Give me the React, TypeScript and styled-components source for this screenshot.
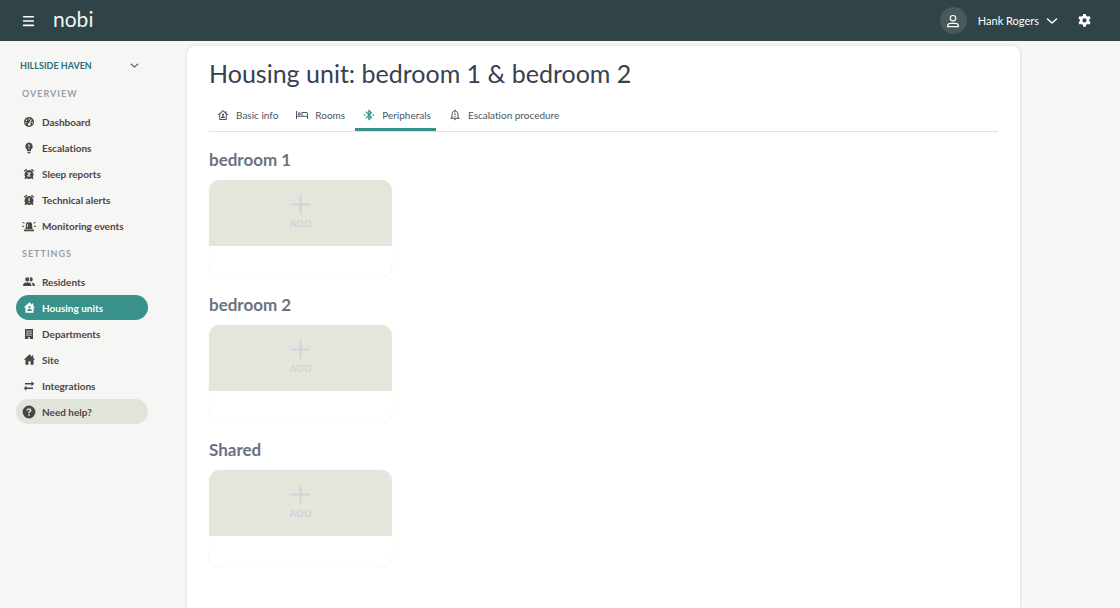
import React from "react";
import styled, { createGlobalStyle } from "styled-components";

const GlobalStyle = createGlobalStyle`
  *, *::before, *::after { box-sizing: border-box; }
  body {
    margin: 0;
    background: #f6f6f4;
    color: #4f4444;
    font-family: Lato, "Liberation Sans", sans-serif;
    font-size: 10px;
    font-variant-ligatures: none;
  }
  h1, h2, h3, ul { margin: 0; padding: 0; }
  ul { list-style: none; }
  button { font: inherit; font-variant-ligatures: none; color: inherit; background: none; border: 0; padding: 0; cursor: pointer; }
`;

const Page = styled.div`
  display: flex;
  flex-direction: column;
  min-height: 100vh;
`;

const TopBar = styled.header`
  display: flex;
  align-items: center;
  justify-content: space-between;
  height: 41px;
  padding: 0 28px 0 22px;
  background: #304346;
  color: #fff;
`;

const BarGroup = styled.div<{ $gap: number }>`
  display: flex;
  align-items: center;
  gap: ${(p) => p.$gap}px;
`;

const IconButton = styled.button`
  display: flex;
  align-items: center;
  justify-content: center;
`;

const Brand = styled.a`
  color: #f1f4f3;
  font-size: 21px;
  font-weight: 400;
  line-height: 24px;
  padding-bottom: 3px;
  text-decoration: none;
`;

const Avatar = styled.span`
  display: flex;
  align-items: center;
  justify-content: center;
  width: 27px;
  height: 27px;
  border-radius: 50%;
  background: #48595c;
`;

const UserButton = styled.button`
  display: flex;
  align-items: center;
  gap: 11px;
  font-size: 11px;
  line-height: 16px;
`;

const UserName = styled.span`
  display: flex;
  align-items: center;
  gap: 7px;
`;

const Body = styled.div`
  display: flex;
  flex: 1;
`;

const Sidebar = styled.nav`
  flex: none;
  width: 187px;
  padding: 12px 39px 0 16px;
`;

const SiteButton = styled.button`
  display: flex;
  align-items: center;
  justify-content: space-between;
  width: 100%;
  height: 25px;
  padding: 0 9px 0 4px;
  color: #2b7076;
  font-size: 9px;
  font-weight: 700;

  svg { color: #5b6470; }
`;

const GroupTitle = styled.h3`
  padding: 8px 6px 7px;
  color: #979fab;
  font-size: 9px;
  font-weight: 700;
  line-height: 16px;
  letter-spacing: 1px;
`;

const NavList = styled.ul`
  display: flex;
  flex-direction: column;
  gap: 1px;
`;

const NavLink = styled.a<{ $tone?: "active" | "help" }>`
  display: flex;
  align-items: center;
  gap: 6px;
  height: 25px;
  padding: 0 6px;
  border-radius: 13px;
  background: ${(p) => (p.$tone === "active" ? "#38918a" : p.$tone === "help" ? "#e1e4da" : "transparent")};
  color: ${(p) => (p.$tone === "active" ? "#fff" : "#4f4444")};
  font-weight: 700;
  text-decoration: none;
`;

const IconSlot = styled.span`
  display: flex;
  justify-content: center;
  width: 14px;
`;

const Card = styled.main`
  flex: 1;
  min-width: 0;
  margin: 5px 100px 0 0;
  padding: 9px 22px 24px;
  background: #fff;
  border-radius: 8px 8px 0 0;
  box-shadow: 0 0 3px rgba(0, 0, 0, 0.16);
`;

const Title = styled.h1`
  color: #374151;
  font-size: 25px;
  font-weight: 400;
  line-height: 36px;
`;

const Tabs = styled.div`
  display: flex;
  gap: 5px;
  margin-top: 10px;
  border-bottom: 1px solid #dfe1e4;
`;

const Tab = styled.button<{ $active?: boolean }>`
  display: flex;
  align-items: center;
  gap: 6px;
  height: 30px;
  padding: 1px 5px 0 7px;
  border-bottom: 3px solid ${(p) => (p.$active ? "#38918a" : "transparent")};
  color: #4b5563;
  font-size: 10px;

  svg { color: ${(p) => (p.$active ? "#38918a" : "#4b5563")}; }
`;

const Room = styled.section`
  padding-top: 16px;
`;

const RoomTitle = styled.h2`
  color: #6b7280;
  font-size: 17px;
  font-weight: 700;
  line-height: 24px;
`;

const Tile = styled.div`
  width: 183px;
  margin-top: 8px;
  padding-bottom: 31px;
  border-radius: 11px;
  box-shadow: 0 0 1px rgba(0, 0, 0, 0.16);
  overflow: hidden;
`;

const AddButton = styled.button`
  display: flex;
  flex-direction: column;
  align-items: center;
  justify-content: center;
  gap: 2px;
  width: 100%;
  height: 66px;
  padding-bottom: 2px;
  background: #e4e6dc;
  color: #d0d4da;
  font-size: 10px;
  font-weight: 700;
  line-height: 14px;
`;

type Glyph = { d: string; size?: number };

const Icon = ({ d, size = 13 }: Glyph) => (
  <svg width={size} height={size} viewBox="0 0 24 24" fill="currentColor" fillRule="evenodd" aria-hidden="true">
    <path d={d} />
  </svg>
);

const Line = ({ d, size = 12, weight = 2 }: Glyph & { weight?: number }) => (
  <svg width={size} height={size} viewBox="0 0 24 24" fill="none" stroke="currentColor" strokeWidth={weight} strokeLinecap="round" strokeLinejoin="round" aria-hidden="true">
    <path d={d} />
  </svg>
);

const CHEVRON = "M3 8l9 8 9-8";

const glyphs = {
  gauge: "M12 2a10 10 0 1 0 0 20 10 10 0 0 0 0-20zM12 4.500a1.500 1.500 0 1 1 0 3 1.500 1.500 0 0 1 0-3zM7 7a1.500 1.500 0 1 1 0 3 1.500 1.500 0 0 1 0-3zM5.500 12a1.500 1.500 0 1 1 0 3 1.500 1.500 0 0 1 0-3zM18.500 12a1.500 1.500 0 1 1 0 3 1.500 1.500 0 0 1 0-3zM15.800 6.500l1.800.9-3.300 7.400a2.700 2.700 0 1 1-2-.8z",
  bulb: "M12 1a7.500 7.500 0 0 0-4 13.800V17a1 1 0 0 0 1 1h6a1 1 0 0 0 1-1v-2.200A7.500 7.500 0 0 0 12 1zM11 4.500h2v6h-2zM11 12.500h2v2h-2zM9 19.500h6v1.500a1 1 0 0 1-1 1h-.5v1h-3v-1H10a1 1 0 0 1-1-1z",
  snooze: "M6.500 1.500L1.500 5.700l1.600 1.900 5-4.200zM17.500 1.500l5 4.200-1.600 1.900-5-4.200zM12 4a9 9 0 0 0-7.500 14L3 20.500 5 22.500l2.300-1.900a9 9 0 0 0 9.400 0L19 22.500l2-2L19.500 18A9 9 0 0 0 12 4zM8.500 9h7v2.200L11.300 15h4.200v2.200h-7V15l4.200-3.800H8.500z",
  alarm: "M6.500 1.500L1.500 5.700l1.600 1.900 5-4.200zM17.500 1.500l5 4.200-1.600 1.900-5-4.200zM12 4a9 9 0 0 0-7.500 14L3 20.500 5 22.500l2.300-1.900a9 9 0 0 0 9.400 0L19 22.500l2-2L19.500 18A9 9 0 0 0 12 4zM11 7.500h2.200v6.500H11zM11 16h2.200v2.200H11z",
  siren: "M6 17l1-9a3 3 0 0 1 3-2.500h4a3 3 0 0 1 3 2.500l1 9zM3.500 18h17v3h-17zM9.300 8.500L8.600 14h1.500l.6-5.500zM0 11.500h3.600v1.800H0zM20.400 11.500H24v1.800h-3.600zM1.300 4.500l3.400 2.200-.9 1.500L.4 6zM22.700 4.500l-3.400 2.200.9 1.500L23.600 6z",
  people: "M16 17v2H2v-2s0-4 7-4 7 4 7 4M12.500 7.500A3.500 3.500 0 1 0 9 11a3.500 3.500 0 0 0 3.500-3.500M15.940 13A5.320 5.320 0 0 1 18 17v2h4v-2s0-3.630-6.060-4M15 4a3.390 3.390 0 0 0-1.930.59 5 5 0 0 1 0 5.820A3.390 3.390 0 0 0 15 11a3.500 3.500 0 0 0 0-7z",
  homeUser: "M12 2.500L1.500 12.200H4.500V21.500h15v-9.300h3L19 9V4.500h-2.500v2.200zM12 9a2.200 2.200 0 1 1 0 4.400A2.200 2.200 0 0 1 12 9zM7.500 18.500v-1c0-1.700 3-2.700 4.500-2.700s4.500 1 4.500 2.700v1z",
  building: "M4 2v20h6.500v-4h3v4H20V2zM7 5h2.300v2.300H7zM10.900 5h2.300v2.300h-2.300zM14.800 5H17v2.300h-2.200zM7 9h2.300v2.300H7zM10.900 9h2.300v2.300h-2.300zM14.800 9H17v2.300h-2.200zM7 13h2.300v2.300H7zM10.900 13h2.300v2.300h-2.300zM14.800 13H17v2.300h-2.200z",
  home: "M10 21.500v-6.500h4v6.500h5.500v-9h3L19 9.300V4.500h-2.500V7L12 2.500 1.500 12.500h3v9z",
  swap: "M17 2.500l5.500 5-5.500 5V8.800H4V6.200h13zM7 11.500v3.700h13v2.600H7v3.700l-5.500-5z",
  bluetooth: "M20.500 10l-2 2 2 2 2-2zM14.900 16.300L13 18.200v-3.800zM13 5.800l1.900 1.900L13 9.600zM18.400 7.700L12.300 1.500H10.600v7L6.400 4.400 4.700 6.100 10.600 12l-5.900 5.900 1.700 1.700 4.200-4.200v7.100h1.700l6.100-6.200L14.100 12zM5.500 12l-2-2-2 2 2 2z",
  homeUserOutline: "M12 2L1 12.200H4.500V22h15v-9.800H23L19 8.500V4.500h-2v2.200zM12 4.700l5.500 5.100V20h-11V9.800zM12 9a2.300 2.300 0 1 0 0 4.600A2.300 2.300 0 0 0 12 9zM8 18.200v-1c0-1.600 2.700-2.500 4-2.500s4 .9 4 2.500v1z",
  bed: "M0 4h2v9.500h9V6h9a4 4 0 0 1 4 4v10h-2v-4.500H2V20H0zM13 8v5.500h9V10a2 2 0 0 0-2-2zM6.500 6.500a3 3 0 1 1 0 6 3 3 0 0 1 0-6zM6.500 8.300a1.200 1.200 0 1 0 0 2.400 1.200 1.200 0 0 0 0-2.400z",
  bell: "M12 1.500a1.800 1.800 0 0 0-1.800 2A7 7 0 0 0 5 10.200V16l-2.500 2.300V19.500h19V18.300L19 16v-5.800a7 7 0 0 0-5.200-6.700 1.800 1.800 0 0 0-1.800-2zM12 5a5 5 0 0 1 5 5.200v6.500l.8 1H6.200l.8-1v-6.500A5 5 0 0 1 12 5zM11 7.500h2v5h-2zM11 14h2v2h-2zM10 20.500h4a2 2 0 0 1-4 0z",
  gear: "M10 1.500h4l.6 3a8 8 0 0 1 2.300 1.300l2.900-1 2 3.500-2.300 2a8 8 0 0 1 0 2.700l2.300 2-2 3.500-2.900-1a8 8 0 0 1-2.300 1.300l-.6 3h-4l-.6-3a8 8 0 0 1-2.300-1.300l-2.900 1-2-3.500 2.300-2a8 8 0 0 1 0-2.700l-2.300-2 2-3.500 2.900 1a8 8 0 0 1 2.300-1.300zM12 8.500a3.300 3.300 0 1 0 0 6.600 3.300 3.300 0 0 0 0-6.600z",
  help: "M12 1a11 11 0 1 0 0 22 11 11 0 0 0 0-22zM12 5.500c2.500 0 4.200 1.500 4.200 3.600 0 3-3 3-3 5.200h-2.500c0-3.600 2.900-3.500 2.900-5.100 0-.9-.6-1.500-1.600-1.500s-1.700.6-1.700 1.700H7.800c0-2.400 1.700-3.900 4.200-3.900zM10.600 15.700h2.700v2.600h-2.700z",
};

type Item = [label: string, d: string, size: number, tone?: "active" | "help"];

const overview: Item[] = [
  ["Dashboard", glyphs.gauge, 12],
  ["Escalations", glyphs.bulb, 12],
  ["Sleep reports", glyphs.snooze, 12],
  ["Technical alerts", glyphs.alarm, 12],
  ["Monitoring events", glyphs.siren, 14],
];

const settings: Item[] = [
  ["Residents", glyphs.people, 14],
  ["Housing units", glyphs.homeUser, 13, "active"],
  ["Departments", glyphs.building, 12],
  ["Site", glyphs.home, 13],
  ["Integrations", glyphs.swap, 12],
  ["Need help?", glyphs.help, 14, "help"],
];

const tabs: Item[] = [
  ["Basic info", glyphs.homeUserOutline, 12],
  ["Rooms", glyphs.bed, 12],
  ["Peripherals", glyphs.bluetooth, 12],
  ["Escalation procedure", glyphs.bell, 12],
];

const NavItems = ({ items }: { items: Item[] }) => (
  <NavList>
    {items.map(([label, d, size, tone]) => (
      <li key={label}>
        <NavLink href="#" $tone={tone} aria-current={tone === "active" ? "page" : undefined}>
          <IconSlot><Icon d={d} size={size} /></IconSlot>
          {label}
        </NavLink>
      </li>
    ))}
  </NavList>
);

export default function App() {
  return (
    <Page>
      <GlobalStyle />
      <TopBar>
        <BarGroup $gap={18}>
          <IconButton aria-label="Menu"><Line d="M3 5h18M3 13h18M3 21h18" size={13} weight={3} /></IconButton>
          <Brand href="#">nobi</Brand>
        </BarGroup>
        <BarGroup $gap={19}>
          <UserButton>
            <Avatar><Line d="M12 2.500a4.700 4.700 0 1 1 0 9.400 4.700 4.700 0 0 1 0-9.400zM2.500 21.500c0-3.500 2.500-5.500 5.500-5.500h8c3 0 5.500 2 5.500 5.500z" size={14} weight={2} /></Avatar>
            <UserName>Hank Rogers <Line d={CHEVRON} size={12} weight={3} /></UserName>
          </UserButton>
          <IconButton aria-label="Settings"><Icon d={glyphs.gear} size={15} /></IconButton>
        </BarGroup>
      </TopBar>
      <Body>
        <Sidebar>
          <SiteButton>HILLSIDE HAVEN <Line d={CHEVRON} size={9} weight={3} /></SiteButton>
          <GroupTitle>OVERVIEW</GroupTitle>
          <NavItems items={overview} />
          <GroupTitle>SETTINGS</GroupTitle>
          <NavItems items={settings} />
        </Sidebar>
        <Card>
          <Title>Housing unit: bedroom 1 &amp; bedroom 2</Title>
          <Tabs role="tablist">
            {tabs.map(([label, d, size]) => (
              <Tab key={label} role="tab" $active={label === "Peripherals"} aria-selected={label === "Peripherals"}>
                <IconSlot><Icon d={d} size={size} /></IconSlot>
                {label}
              </Tab>
            ))}
          </Tabs>
          {["bedroom 1", "bedroom 2", "Shared"].map((room) => (
            <Room key={room}>
              <RoomTitle>{room}</RoomTitle>
              <Tile>
                <AddButton>
                  <Line d="M12 1v22M1 12h22" size={19} weight={2.6} />
                  ADD
                </AddButton>
              </Tile>
            </Room>
          ))}
        </Card>
      </Body>
    </Page>
  );
}
